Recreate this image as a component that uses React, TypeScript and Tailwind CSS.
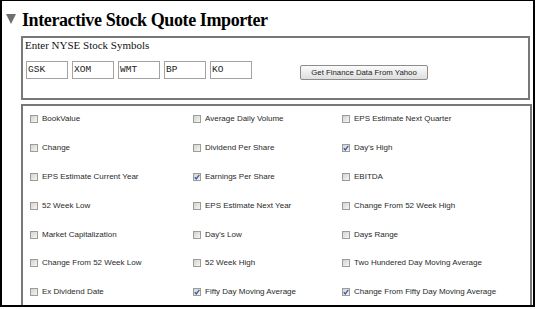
import React from 'react';

const symbols = ['GSK', 'XOM', 'WMT', 'BP', 'KO'];

const fields: [string, boolean][] = [
    ['BookValue', false], ['Average Daily Volume', false], ['EPS Estimate Next Quarter', false],
    ['Change', false], ['Dividend Per Share', false], ["Day's High", true],
    ['EPS Estimate Current Year', false], ['Earnings Per Share', true], ['EBITDA', false],
    ['52 Week Low', false], ['EPS Estimate Next Year', false], ['Change From 52 Week High', false],
    ['Market Capitalization', false], ["Day's Low", false], ['Days Range', false],
    ['Change From 52 Week Low', false], ['52 Week High', false], ['Two Hundered Day Moving Average', false],
    ['Ex Dividend Date', false], ['Fifty Day Moving Average', true], ['Change From Fifty Day Moving Average', true],
];

const sans = { fontFamily: '"Liberation Sans", Arial, sans-serif' };
const serif = { fontFamily: '"Liberation Serif", "Times New Roman", serif' };

function Box({ checked }: { checked: boolean }) {
    return (
        <span className="w-[8px] h-[8px] shrink-0 border border-[#9c9c9c] bg-gradient-to-br from-[#d4d4ce] to-[#f5f5f2] flex items-center justify-center">
            {checked && (
                <svg width="6" height="6" viewBox="0 0 6 6">
                    <path d="M0.8 3.2 L2.3 4.9 L5.3 0.8" fill="none" stroke="#3a5ba8" strokeWidth="1.3" />
                </svg>
            )}
        </span>
    );
}

export default function App() {
    return (
        <div className="w-[535px] h-[307px] overflow-hidden bg-white border-t border-x-2 border-b-2 border-black">
            {/* Title */}
            <div className="flex items-start pt-[9px] pl-[4px] h-[35px]">
                <svg width="10" height="10" viewBox="0 0 10 10" className="mt-[4px]">
                    <path d="M0 0 H10 L5 10 Z" fill="#6e6e6e" />
                </svg>
                <h1 className="ml-[6px] text-[18px] leading-[20px] tracking-[-0.4px] font-bold text-black" style={serif}>
                    Interactive Stock Quote Importer
                </h1>
            </div>

            {/* Symbols */}
            <div className="ml-[19px] mr-[3px] h-[64px] border-2 border-[#787878] pl-[2px] pt-[1px]">
                <div className="text-[11px] leading-[13px] text-[#111]" style={serif}>
                    Enter NYSE Stock Symbols
                </div>
                <div className="flex items-start mt-[9px] pl-[1px]">
                    {symbols.map((s) => (
                        <div
                            key={s}
                            className="w-[42px] h-[18px] mr-[4px] border border-[#a3a3a3] flex items-center pl-[1px] pt-[1px] text-[9.5px] text-[#222]"
                            style={{ fontFamily: '"Liberation Mono", monospace' }}
                        >
                            {s}
                        </div>
                    ))}
                    <button
                        className="ml-[44px] mt-[4px] w-[128px] h-[15px] rounded-[2px] border border-[#8c8c8c] bg-gradient-to-b from-[#fbfbfb] to-[#dedede] text-[7.8px] leading-[13px] text-[#222]"
                        style={sans}
                    >
                        Get Finance Data From Yahoo
                    </button>
                </div>
            </div>

            {/* Fields */}
            <div className="ml-[19px] mr-[1px] mt-[4px] h-[230px] border-2 border-[#787878] pl-[7px]">
                <div className="grid grid-cols-[163px_149px_1fr] -mt-[1px]">
                    {fields.map(([label, checked]) => (
                        <div key={label} className="flex items-center h-[28.8px] gap-[4px]">
                            <Box checked={checked} />
                            <span className="text-[8px] text-[#2a2a2a] whitespace-nowrap" style={sans}>
                                {label}
                            </span>
                        </div>
                    ))}
                </div>
            </div>
        </div>
    );
}
